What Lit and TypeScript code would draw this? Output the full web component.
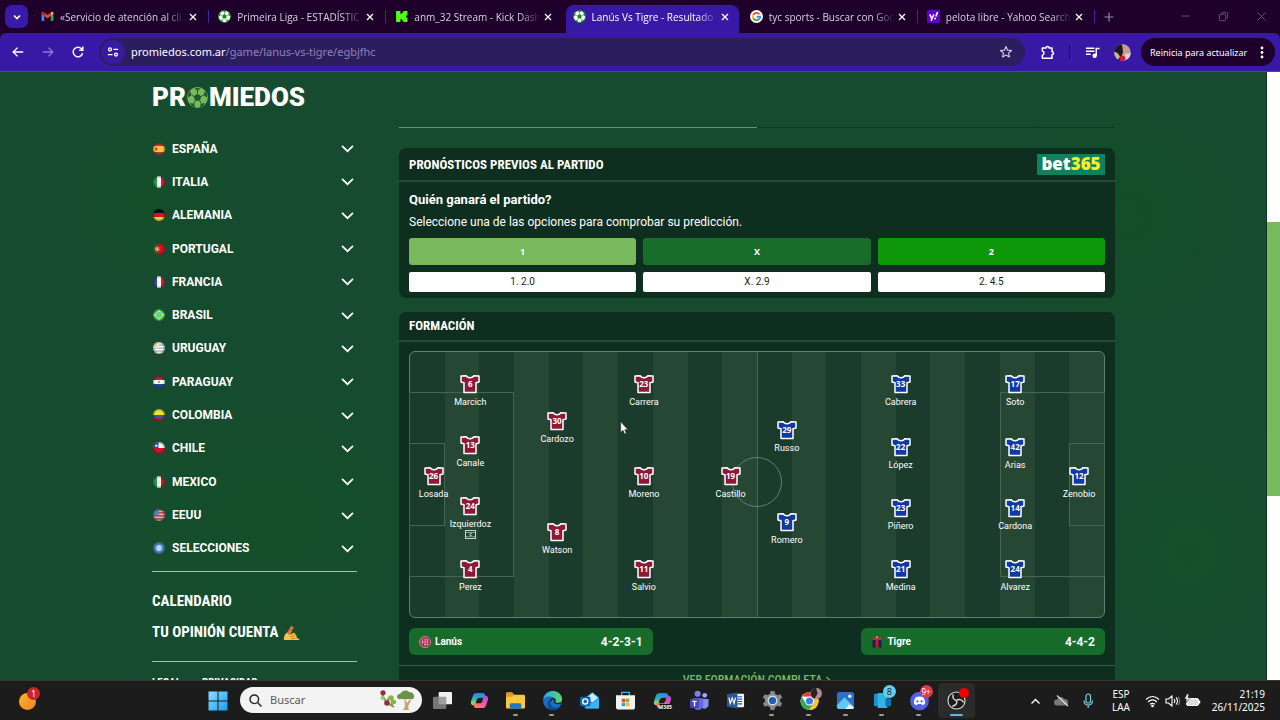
import { LitElement, html, svg, css } from "lit";
import { customElement } from "lit/decorators.js";
import { classMap } from "lit/directives/class-map.js";
import { styleMap } from "lit/directives/style-map.js";

/* ---------- shared icons ---------- */

const ball = (dark: string, light: string, rim = dark) => html`<svg viewBox="0 0 24 24">
  <circle cx="12" cy="12" r="11.2" fill=${light} stroke=${rim} stroke-width="1.4" />
  <path fill=${dark} d="M12 7.6l4.300 3.100-1.600 5.100H9.300L7.700 10.700zM8.300 1.500h7.400L12 4.600zM1 8.600l2.600-4 1.500 4.600-4 3.200zM23 8.600l-2.600-4-1.500 4.600 4 3.200zM3.200 18.600l4.800.2 1.500 4.300-3.600-1.500zM20.800 18.600l-4.800.2-1.500 4.300 3.600-1.500z" />
  <path d="M12 4.600v3M5.100 9.200l2.600 1.500M18.900 9.200l-2.600 1.500M8 18.800l1.300-3M16 18.800l-1.300-3" stroke=${dark} stroke-width="1.100" />
</svg>`;

const closeIcon = html`<svg viewBox="0 0 10 10"><path d="M2 2l6 6M8 2L2 8" stroke="currentColor" stroke-width="1.300" fill="none" /></svg>`;

const tabIcons: Record<string, unknown> = {
  gmail: html`<svg viewBox="0 0 24 24">
    <path d="M1 6v13a1.500 1.500 0 0 0 1.500 1.500H6V10z" fill="#4285f4" />
    <path d="M23 6v13a1.500 1.500 0 0 1-1.500 1.500H18V10z" fill="#34a853" />
    <path d="M18 5v6l5-4V5.500c0-2-2.200-3-3.800-1.900z" fill="#fbbc04" />
    <path d="M6 11V4.800l6 4.500 6-4.500V11l-6 4.500z" fill="#ea4335" />
    <path d="M1 5.500V7l5 4V4.800L4.800 3.600C3.200 2.500 1 3.500 1 5.500z" fill="#c5221f" />
  </svg>`,
  ball: ball("#128a1e", "#ffffff"),
  kick: html`<svg viewBox="0 0 24 24"><path fill="#53fc18" d="M2 2h8v5h3V4.500h2.500V2H23v8h-2.500v4H23v8h-7.500v-2.500H13V17h-3v5H2z" /></svg>`,
  google: html`<svg viewBox="0 0 24 24">
    <circle cx="12" cy="12" r="12" fill="#fff" />
    <g fill="none" stroke-width="3.400">
      <path d="M17.300 7.800A6.800 6.800 0 0 0 6 9" stroke="#ea4335" />
      <path d="M6 9a6.800 6.800 0 0 0 0 6" stroke="#fbbc05" />
      <path d="M6 15a6.800 6.800 0 0 0 10.600 2.200" stroke="#34a853" />
      <path d="M16.600 17.200A6.800 6.800 0 0 0 18.800 12.500H12.300" stroke="#4285f4" />
    </g>
  </svg>`,
  yahoo: html`<svg viewBox="0 0 24 24">
    <rect width="24" height="24" rx="2" fill="#6001d2" />
    <path d="M5 8l3.700 7.500M12.600 8L7.500 20" stroke="#fff" stroke-width="2.800" fill="none" />
    <path d="M19.500 4l-3.200 8" stroke="#fff" stroke-width="3" />
    <circle cx="15" cy="15.800" r="1.800" fill="#fff" />
  </svg>`,
};

/* ---------- flags ---------- */

const bars = (vertical: boolean, colors: [string, number][]) => {
  let at = 0;
  return colors.map(([c, size]) => {
    const start = at;
    at += size;
    return vertical
      ? svg`<rect x=${start} y="0" width=${size} height="24" fill=${c} />`
      : svg`<rect x="0" y=${start} width="24" height=${size} fill=${c} />`;
  });
};

const flagArt: Record<string, unknown> = {
  es: svg`${bars(false, [["#c8323c", 6], ["#ffc83a", 12], ["#c8323c", 6]])}<rect x="4" y="9" width="5" height="6" rx="1" fill="#b5562a" />`,
  it: svg`${bars(true, [["#2a9a4b", 8], ["#f4f4f4", 8], ["#c2243a", 8]])}`,
  de: svg`${bars(false, [["#0c0c0c", 8], ["#d3122a", 8], ["#ffcf3a", 8]])}`,
  pt: svg`${bars(true, [["#2c7a2c", 8], ["#d01224", 16]])}<circle cx="8.500" cy="12" r="4.500" fill="#e8a060" /><circle cx="8.500" cy="12" r="2.800" fill="#d8424c" /><circle cx="8.500" cy="12" r="1.600" fill="#fff" />`,
  fr: svg`${bars(true, [["#33489a", 8], ["#f8f8f8", 8], ["#c2243a", 8]])}`,
  br: svg`<rect width="24" height="24" fill="#43b84b" /><path d="M12 1l12 11-12 11L0 12z" fill="#d8ec4a" /><circle cx="12" cy="12" r="6.500" fill="#4fd8b4" />`,
  uy: svg`${bars(false, [["#fff", 4], ["#c3d3e6", 3], ["#fff", 3], ["#c3d3e6", 3], ["#fff", 3], ["#c3d3e6", 3], ["#fff", 5]])}<rect width="11" height="12" fill="#f3f3dc" /><circle cx="7" cy="8" r="2.600" fill="#f0dc86" />`,
  py: svg`${bars(false, [["#c8202c", 8], ["#fff", 8], ["#26469c", 8]])}<circle cx="12" cy="12" r="2.500" fill="#8fa8b8" />`,
  co: svg`${bars(false, [["#f0e52a", 12], ["#3d55a0", 6], ["#b8202c", 6]])}`,
  cl: svg`${bars(false, [["#f6f6f6", 12], ["#d0142a", 12]])}<rect width="11" height="12" fill="#2d4fa4" /><path d="M6.500 3.800l1 2.300 2.500.1-2 1.500.8 2.400-2.300-1.300-2.200 1.300.7-2.400-2-1.500 2.500-.1z" fill="#fff" />`,
  mx: svg`${bars(true, [["#2a9a5b", 8], ["#f4f4ee", 8], ["#b8202c", 8]])}<circle cx="12" cy="12" r="2" fill="#dcd8c0" />`,
  us: svg`${bars(false, [["#c9404e", 3], ["#e4b4b8", 3], ["#c9404e", 3], ["#e4b4b8", 3], ["#c9404e", 3], ["#e4b4b8", 3], ["#c9404e", 3], ["#e4b4b8", 3]])}<rect width="12" height="12" fill="#6a7cb8" />`,
  un: svg`<rect width="24" height="24" fill="#4a86c4" /><circle cx="12" cy="12" r="6" fill="#a4c8e4" /><path d="M8 11l3 3 5-5M12 7v3M9 16h6" fill="none" stroke="#f0f8fc" stroke-width="1.500" />`,
};

const flag = (code: string) => html`<svg viewBox="0 0 24 24">
  <defs>
    <clipPath id="round"><circle cx="12" cy="12" r="12" /></clipPath>
    <radialGradient id="shade"><stop offset=".6" stop-color="#000" stop-opacity="0" /><stop offset="1" stop-color="#000" stop-opacity=".35" /></radialGradient>
  </defs>
  <g clip-path="url(#round)">${flagArt[code]}</g>
  <circle cx="12" cy="12" r="12" fill="url(#shade)" />
</svg>`;

/* ---------- browser window ---------- */

@customElement("browser-chrome")
class BrowserChrome extends LitElement {
  tabs = [
    { icon: "gmail", title: "«Servicio de atención al cli" },
    { icon: "ball", title: "Primeira Liga - ESTADÍSTIC" },
    { icon: "kick", title: "anm_32 Stream - Kick Dash" },
    { icon: "ball", title: "Lanús Vs Tigre - Resultado", active: true },
    { icon: "google", title: "tyc sports - Buscar con Goo" },
    { icon: "yahoo", title: "pelota libre - Yahoo Search" },
  ];

  static styles = css`
    :host { display: block; background: #1e002b; color: #d9cfe6; font-family: "Open Sans", "Noto Sans", sans-serif; font-size: 10px; }
    button { border: 0; background: none; padding: 0; color: inherit; font: inherit; display: grid; place-items: center; }
    svg { display: block; width: 100%; height: 100%; }
    .strip { display: flex; height: 33px; align-items: stretch; }
    .search-tabs { width: 23px; height: 23px; margin: 5px 4px 5px 5px; border-radius: 7px; background: #381ba6; color: #fff; }
    .search-tabs svg { width: 10px; height: 10px; }
    .tabs { flex: 1; display: flex; min-width: 0; }
    .tab { flex: 1; min-width: 0; display: flex; align-items: center; padding: 0 11px 0 9px; position: relative; }
    .tab:not(.active):not(.before)::after { content: ""; position: absolute; right: 0; top: 10px; height: 13px; width: 1px; background: #3f22b0; }
    .tab.active { color: #fff; }
    .tab.active::before { content: ""; position: absolute; inset: 5px 2px 0 2px; border-radius: 8px 8px 0 0; background: #3719a6; }
    .fav { flex: none; width: 13px; height: 13px; position: relative; margin-right: 6px; }
    .title { flex: 1; min-width: 0; overflow: hidden; white-space: nowrap; position: relative; line-height: 16px; mask-image: linear-gradient(90deg, #000 82%, transparent 98%); }
    .close { flex: none; width: 10px; height: 10px; color: #fff; position: relative; }
    .right { flex: none; width: 185px; display: flex; align-items: center; color: #9a84ae; }
    .new { width: 28px; height: 28px; }
    .new svg { width: 10px; height: 10px; }
    .window { margin-left: auto; display: flex; color: #6b5778; }
    .window button { width: 38px; height: 30px; }
    .window svg { width: 11px; height: 11px; }
    .bar { height: 39px; box-sizing: border-box; border-bottom: 1px solid #49479a; border-radius: 6px 6px 0 0; background: #3719a6; display: flex; align-items: center; color: #fff; }
    .nav { width: 30px; height: 28px; }
    .navs { display: flex; padding-left: 3px; width: 99px; box-sizing: border-box; }
    .nav svg { width: 14px; height: 14px; }
    .nav.off { color: #8d79cc; }
    .address { flex: 1; display: flex; align-items: center; height: 28px; border-radius: 14px; background: #2c1d5f; min-width: 0; }
    .site { width: 24px; height: 24px; border-radius: 12px; background: #371aa0; margin-left: 2px; }
    .site svg { width: 12px; height: 12px; }
    .url { flex: 1; margin-left: 6px; font: 11px/20px "Noto Sans", "Open Sans", sans-serif; color: #8e84b0; white-space: nowrap; }
    .url b { font-weight: 400; color: #fff; }
    .star { width: 38px; height: 28px; color: #d6cdea; }
    .star svg { width: 14px; height: 14px; }
    .ext { width: 44px; height: 28px; }
    .ext svg { width: 15px; height: 15px; }
    .sep { width: 1px; height: 14px; background: #23105f; }
    .media { width: 44px; height: 28px; }
    .media svg { width: 15px; height: 15px; }
    .avatar { width: 17px; height: 17px; border-radius: 50%; margin-right: 10px; }
    .update { height: 28px; border-radius: 14px; background: #1e002b; padding: 0 11px 0 9px; margin-right: 5px; display: flex; align-items: center; font-family: "Noto Sans", "Open Sans", sans-serif; font-size: 9px; width: 134px; box-sizing: border-box; justify-content: space-between; white-space: nowrap; }
    .update svg { width: 4px; height: 13px; }
  `;

  render() {
    const activeAt = this.tabs.findIndex((t) => t.active);
    return html`
      <div class="strip">
        <button class="search-tabs" aria-label="Buscar pestañas">
          <svg viewBox="0 0 10 10"><path d="M2 3.500l3 3 3-3" fill="none" stroke="currentColor" stroke-width="1.700" /></svg>
        </button>
        <div class="tabs">
          ${this.tabs.map(
            (t, i) => html`<div class=${classMap({ tab: true, active: i === activeAt, before: i === activeAt - 1 || i === activeAt })}>
              <span class="fav">${tabIcons[t.icon]}</span>
              <span class="title">${t.title}</span>
              <button class="close" aria-label="Cerrar">${closeIcon}</button>
            </div>`
          )}
        </div>
        <div class="right">
          <button class="new" aria-label="Nueva pestaña"><svg viewBox="0 0 10 10"><path d="M5 .5v9M.5 5h9" stroke="currentColor" stroke-width="1.200" /></svg></button>
          <div class="window">
            <button aria-label="Minimizar"><svg viewBox="0 0 12 12"><path d="M1.500 5.500h9" stroke="currentColor" /></svg></button>
            <button aria-label="Restaurar"><svg viewBox="0 0 12 12" fill="none" stroke="currentColor"><rect x="1.500" y="3.500" width="7" height="7" rx="1" /><path d="M4 3V2.500a1 1 0 0 1 1-1h4.500a1 1 0 0 1 1 1V7a1 1 0 0 1-1 1H9" /></svg></button>
            <button aria-label="Cerrar ventana"><svg viewBox="0 0 12 12"><path d="M1.500 1.500l9 9M10.500 1.500l-9 9" stroke="currentColor" /></svg></button>
          </div>
        </div>
      </div>
      <div class="bar">
        <div class="navs">
          <button class="nav" aria-label="Atrás"><svg viewBox="0 0 16 16"><path d="M14 8H3M7.500 3L2.500 8l5 5" fill="none" stroke="currentColor" stroke-width="1.600" /></svg></button>
          <button class="nav off" aria-label="Adelante"><svg viewBox="0 0 16 16"><path d="M2 8h11M8.500 3l5 5-5 5" fill="none" stroke="currentColor" stroke-width="1.600" /></svg></button>
          <button class="nav" aria-label="Recargar"><svg viewBox="0 0 16 16"><path d="M13.300 9.500A5.500 5.500 0 1 1 12 4.200l1.300 1.400M13.500 1.800v4.100H9.400" fill="none" stroke="currentColor" stroke-width="1.700" /></svg></button>
        </div>
        <div class="address">
          <button class="site" aria-label="Información del sitio"><svg viewBox="0 0 14 14" fill="none" stroke="#fff" stroke-width="1.500"><circle cx="3.500" cy="4" r="1.700" /><path d="M7.500 4H13M1 10h5.500" /><circle cx="10.500" cy="10" r="1.700" /></svg></button>
          <span class="url"><b>promiedos.com.ar</b>/game/lanus-vs-tigre/egbjfhc</span>
          <button class="star" aria-label="Favorito"><svg viewBox="0 0 16 16"><path d="M8 1.800l1.800 4.100 4.500.4-3.400 3 1 4.400L8 11.400l-3.900 2.300 1-4.400-3.400-3 4.500-.4z" fill="none" stroke="currentColor" stroke-width="1.300" stroke-linejoin="round" /></svg></button>
        </div>
        <button class="ext" aria-label="Extensiones"><svg viewBox="0 0 16 16"><path d="M2.500 3.200h4a1.600 1.600 0 0 1 3.200 0h3.100v4a1.600 1.600 0 0 1 0 3.200v3.600H2.500v-3.200c2.300-.3 2.300-4 0-4.300z" fill="none" stroke="currentColor" stroke-width="1.600" stroke-linejoin="round" /></svg></button>
        <span class="sep"></span>
        <button class="media" aria-label="Multimedia"><svg viewBox="0 0 16 16" fill="none" stroke="currentColor" stroke-width="1.500"><path d="M1 3.500h9M1 6.700h9M1 9.900h5" /><circle cx="10.300" cy="11.500" r="1.600" fill="currentColor" /><path d="M12 11.500V3.800h3.500" /></svg></button>
        <svg class="avatar" viewBox="0 0 17 17"><clipPath id="a"><circle cx="8.500" cy="8.500" r="8.500" /></clipPath><g clip-path="url(#a)"><rect width="17" height="17" fill="#c79a94" /><path d="M0 0h8l1 8-3 9H0z" fill="#1c1a20" /><path d="M0 8c3 0 5 2 6 5l-3 4H0z" fill="#c9b6a0" /><path d="M11 10l6-1v8h-7z" fill="#ddd3d6" /><circle cx="8.500" cy="14.500" r="2.800" fill="#e0152c" /></g></svg>
        <button class="update"><span>Reinicia para actualizar</span><svg viewBox="0 0 4 13" fill="#fff"><circle cx="2" cy="2" r="1.400" /><circle cx="2" cy="6.500" r="1.400" /><circle cx="2" cy="11" r="1.400" /></svg></button>
      </div>
    `;
  }
}

/* ---------- sidebar ---------- */

@customElement("side-nav")
class SideNav extends LitElement {
  countries = [
    ["es", "ESPAÑA"], ["it", "ITALIA"], ["de", "ALEMANIA"], ["pt", "PORTUGAL"], ["fr", "FRANCIA"], ["br", "BRASIL"], ["uy", "URUGUAY"],
    ["py", "PARAGUAY"], ["co", "COLOMBIA"], ["cl", "CHILE"], ["mx", "MEXICO"], ["us", "EEUU"], ["un", "SELECCIONES"],
  ];

  static styles = css`
    :host { display: block; color: #fff; font-family: Roboto, sans-serif; }
    .logo { display: flex; align-items: center; height: 28px; margin-top: 11px; font-weight: 900; font-size: 26px; line-height: 28px; color: #fff; text-decoration: none; }
    .logo svg { width: 21px; height: 21px; margin: 0 1px; display: block; }
    .list { list-style: none; margin: 21px 0 0; padding: 0; display: grid; grid-auto-rows: 1fr; min-height: 433px; }
    li { display: grid; }
    .item { display: flex; align-items: center; gap: 7px; border: 0; background: none; padding: 0 3px 0 1px; color: #fff; font: 700 12px/20px Roboto, sans-serif; }
    .item .flag { width: 12px; height: 12px; }
    .item svg { display: block; width: 100%; height: 100%; }
    .item .down { margin-left: auto; width: 13px; height: 13px; }
    .links { margin-top: 6px; border: solid #9fc8a8; border-width: 1px 0; padding: 14px 0 13px; display: grid; font-family: "Roboto Condensed", "Liberation Sans Narrow", Roboto, sans-serif; font-weight: 700; font-size: 15px; line-height: 31px; }
    a { color: #fff; text-decoration: none; white-space: nowrap; }
    .legal { display: flex; gap: 21px; margin-top: 11px; font: 700 11px/20px "Roboto Condensed", "Liberation Sans Narrow", Roboto, sans-serif; }
    .links a { display: flex; align-items: center; gap: 5px; }
    .hand { width: 17px; height: 16px; }
  `;

  render() {
    return html`
      <a class="logo" href="#" aria-label="Promiedos">PR${ball("#1b5a2c", "#77b95c", "#77b95c")}MIEDOS</a>
      <ul class="list">
        ${this.countries.map(
          ([code, name]) => html`<li><button class="item">
            <span class="flag">${flag(code)}</span>${name}
            <span class="down"><svg viewBox="0 0 13 13"><path d="M1 3.800l5.500 5.400L12 3.800" fill="none" stroke="#fff" stroke-width="1.700" /></svg></span>
          </button></li>`
        )}
      </ul>
      <nav class="links">
        <a href="#">CALENDARIO</a>
        <a href="#">TU OPINIÓN CUENTA
          <svg class="hand" viewBox="0 0 17 16"><path d="M1 15c-.6-3 .6-5.500 3-7.500L7 5l1.800 1.200-2 3 4-1.400c1.200-.3 1.800 1 .8 1.700 1.600-.4 2.400 1 1.300 1.800 1.300 0 1.700 1.300.6 1.900l2.700.6v1.300H1z" fill="#fac04c" /><path d="M3.500 8.500L8.300.8 11 2.500 5.800 10z" fill="#e8702e" /><path d="M3.500 8.500L5.800 10l-2.600 1.500z" fill="#f4d8a0" /><path d="M6.500 10.200l4-1.500M7.500 12l4.500-1.200M8 13.500h4.500" stroke="#b8741c" stroke-width=".7" fill="none" /></svg>
        </a>
      </nav>
      <div class="legal"><a href="#">LEGAL</a><a href="#">PRIVACIDAD</a></div>
    `;
  }
}

/* ---------- formation ---------- */

type Player = { n: number; name: string; x: number; y: number; armband?: boolean };

@customElement("team-pitch")
class TeamPitch extends LitElement {
  /* x and y are percentages of the pitch, measured to the middle of the shirt */
  home: Player[] = [
    { n: 26, name: "Losada", x: 3.4, y: 46.8 },
    { n: 6, name: "Marcich", x: 8.7, y: 12.2 },
    { n: 13, name: "Canale", x: 8.7, y: 35.2 },
    { n: 24, name: "Izquierdoz", x: 8.7, y: 58.2, armband: true },
    { n: 4, name: "Perez", x: 8.7, y: 81.8 },
    { n: 30, name: "Cardozo", x: 21.2, y: 26.2 },
    { n: 8, name: "Watson", x: 21.2, y: 67.8 },
    { n: 23, name: "Carrera", x: 33.7, y: 12.2 },
    { n: 10, name: "Moreno", x: 33.7, y: 46.8 },
    { n: 11, name: "Salvio", x: 33.7, y: 81.8 },
    { n: 19, name: "Castillo", x: 46.2, y: 46.8 },
  ];
  away: Player[] = [
    { n: 29, name: "Russo", x: 54.3, y: 29.6 },
    { n: 9, name: "Romero", x: 54.3, y: 64.3 },
    { n: 33, name: "Cabrera", x: 70.7, y: 12.2 },
    { n: 22, name: "López", x: 70.7, y: 35.9 },
    { n: 23, name: "Piñero", x: 70.7, y: 58.8 },
    { n: 21, name: "Medina", x: 70.7, y: 81.8 },
    { n: 17, name: "Soto", x: 87.2, y: 12.2 },
    { n: 42, name: "Arias", x: 87.2, y: 35.9 },
    { n: 14, name: "Cardona", x: 87.2, y: 58.8 },
    { n: 24, name: "Alvarez", x: 87.2, y: 81.8 },
    { n: 12, name: "Zenobio", x: 96.4, y: 46.8 },
  ];

  static styles = css`
    :host { display: block; font-family: Roboto, sans-serif; }
    .pitch { position: relative; box-sizing: border-box; height: 267px; border: 1px solid #64806c; border-radius: 6px; background: repeating-linear-gradient(90deg, #1b3b2c 0 5%, #274735 5% 10%); }
    .line { position: absolute; box-sizing: border-box; border: 1px solid #466552; }
    .box-l { left: -1px; top: 15.2%; width: 15.2%; height: 69.6%; }
    .goal-l { left: -1px; top: 34.200%; width: 5.200%; height: 31.600%; }
    .box-r { right: -1px; top: 15.2%; width: 15.2%; height: 69.6%; }
    .goal-r { right: -1px; top: 34.200%; width: 5.200%; height: 31.600%; }
    .half { left: 50%; top: 0; height: 100%; width: 1px; border-width: 0 0 0 1px; }
    .circle { left: 50%; top: 49%; width: 50px; height: 50px; margin: -25px; border-radius: 50%; border-color: #64806c; }
    .player { position: absolute; width: 60px; margin: -10px 0 0 -30px; display: grid; justify-items: center; color: #fff; text-decoration: none; font-size: 9px; line-height: 12px; }
    .shirt { position: relative; width: 20px; height: 20px; margin-bottom: 2px; display: grid; place-items: center; }
    .shirt svg { position: absolute; inset: 0; }
    .num { position: relative; font: 700 8px/10px "Open Sans", "Noto Sans", sans-serif; }
    .home { fill: #8f1838; }
    .away { fill: #1039a3; }
    .armband { width: 11px; height: 9px; }
    .cursor { position: absolute; left: 30.200%; top: 26%; width: 9px; height: 14px; }
  `;

  player(p: Player, side: string) {
    return html`<a href="#" class="player" style=${styleMap({ left: p.x + "%", top: p.y + "%" })}>
      <span class="shirt">
        <svg viewBox="0 0 20 20"><path class=${side} d="M6.300 1.700L1 2v6l3 .8V18.500h12V8.800L19 8V2l-5.300-.3C12.800 4.300 7.200 4.300 6.300 1.700z" stroke="#fff" stroke-width="1.500" stroke-linejoin="round" /></svg>
        <span class="num">${p.n}</span>
      </span>
      <span>${p.name}</span>
      ${p.armband
        ? html`<svg class="armband" viewBox="0 0 11 9" fill="none" stroke="#c9d4cc"><rect x=".5" y=".5" width="10" height="8" /><path d="M.5 2.500h10M.5 6.700h10" stroke-width=".6" /><path d="M6.800 3.400a1.300 1.300 0 1 0 0 2.200" /></svg>`
        : ""}
    </a>`;
  }

  render() {
    return html`<div class="pitch">
      <span class="line box-l"></span><span class="line goal-l"></span>
      <span class="line box-r"></span><span class="line goal-r"></span>
      <span class="line half"></span><span class="line circle"></span>
      ${this.home.map((p) => this.player(p, "home"))} ${this.away.map((p) => this.player(p, "away"))}
      <svg class="cursor" viewBox="0 0 9 14"><path d="M.7.7v10.600l2.300-2 1.600 3.700 1.700-.8-1.600-3.500h3.200z" fill="#fff" stroke="#222" stroke-width=".5" /></svg>
    </div>`;
  }
}

/* ---------- match page ---------- */

@customElement("match-page")
class MatchPage extends LitElement {
  odds = [
    { key: "1", value: "2.0", tone: "light" },
    { key: "X", value: "2.9", tone: "mid" },
    { key: "2", value: "4.5", tone: "vivid" },
  ];

  static styles = css`
    :host { display: flex; overflow: hidden; min-height: 0; font-family: Roboto, sans-serif; color: #fff; }
    .page { flex: 1; min-width: 0; overflow: hidden; padding-left: 1px; border-right: 1px solid #10331f; background:
      radial-gradient(closest-side, #134f29 0, transparent) 60px 280px / 420px 340px no-repeat,
      radial-gradient(closest-side, #124e28 0, transparent) 930px -20px / 380px 330px no-repeat,
      radial-gradient(closest-side, #134e2a 0, transparent) 0 0 / 300px 260px no-repeat,
      radial-gradient(closest-side, #144f2a 0, transparent) 1060px 330px / 260px 300px no-repeat,
      #164b30; }
    .wrap { max-width: 963px; margin: 0 auto; display: grid; grid-template-columns: 205px minmax(0, 1fr); gap: 42px; }
    .scroll { width: 13px; background: #fff; display: flex; flex-direction: column; }
    .thumb { background: #77b95c; flex: 274; }
    .before { flex: 150; }
    .after { flex: 184; }
    .steps { height: 1px; margin-top: 55px; background: linear-gradient(90deg, #5c9c56 50%, #0f3a22 50%); }
    .card { background: #0e2e1f; border-radius: 7px; margin-top: 20px; }
    .card + .card { margin-top: 14px; }
    .head { display: flex; align-items: center; justify-content: space-between; padding: 0 10px; border-bottom: 2px solid #2a4b38; height: 28px; }
    .head.tall { height: 32px; }
    h2 { margin: 0; font: 700 13px/20px "Roboto Condensed", "Liberation Sans Narrow", Roboto, sans-serif; white-space: nowrap; }
    .tall h2 { padding-top: 2px; }
    .brand { background: #12805a; width: 68px; height: 21px; display: grid; place-items: center; font: 900 17px/20px "Noto Sans", "Open Sans", sans-serif; text-decoration: none; color: #fff; }
    .brand b { font-weight: inherit; color: #f6ee2c; }
    .body { padding: 8px 10px 6px; }
    h3 { margin: 0; font-size: 13px; line-height: 20px; font-weight: 700; }
    p { margin: 2px 0 6px; font-size: 12px; line-height: 20px; }
    .odds { display: grid; grid-template-columns: repeat(3, 1fr); gap: 7px; }
    button { border: 0; padding: 0; color: #fff; border-radius: 3px; font: 700 9px/27px "Open Sans", sans-serif; }
    .light { background: #77b95c; }
    .mid { background: #196d2b; }
    .vivid { background: #0e9708; }
    .odd { background: #fff; color: #222; text-align: center; font-size: 10px; line-height: 20px; border-radius: 2px; text-decoration: none; }
    .field { padding: 9px 10px 10px; }
    .teams { display: flex; justify-content: space-between; margin-top: 10px; }
    .team { width: 35%; box-sizing: border-box; height: 27px; border-radius: 6px; background: #186c2b; display: flex; align-items: center; gap: 4px; padding: 0 10px; font-weight: 700; font-size: 10px; line-height: 20px; }
    .team svg { width: 12px; height: 12px; }
    .system { margin-left: auto; font-size: 12px; }
    .more { display: flex; justify-content: center; align-items: center; gap: 3px; border-top: 1px solid #3c5c48; padding: 4px 0 10px; color: #77b95c; font: 500 12px/20px "Roboto Condensed", "Liberation Sans Narrow", Roboto, sans-serif; text-decoration: none; }
    .more svg { width: 6px; height: 8px; }
  `;

  render() {
    return html`
      <div class="page">
        <div class="wrap">
          <side-nav></side-nav>
          <main>
            <div class="steps"></div>
            <section class="card">
              <div class="head tall"><h2>PRONÓSTICOS PREVIOS AL PARTIDO</h2><a class="brand" href="#"><span>bet<b>365</b></span></a></div>
              <div class="body">
                <h3>Quién ganará el partido?</h3>
                <p>Seleccione una de las opciones para comprobar su predicción.</p>
                <div class="odds">
                  ${this.odds.map((o) => html`<button class=${o.tone}>${o.key}</button>`)}
                  ${this.odds.map((o) => html`<a class="odd" href="#">${o.key}. ${o.value}</a>`)}
                </div>
              </div>
            </section>
            <section class="card">
              <div class="head"><h2>FORMACIÓN</h2></div>
              <div class="field">
                <team-pitch></team-pitch>
                <div class="teams">
                  <div class="team">
                    <svg viewBox="0 0 12 12"><circle cx="6" cy="6" r="5.500" fill="#a8244e" stroke="#d9a0b4" stroke-width=".8" /><path d="M3.500 2.500v6M2 6h7.500M6 2v8M8.500 3v6M6 3.800h3M5 8.500h4" stroke="#e6b8c6" stroke-width=".7" fill="none" /></svg>
                    <span>Lanús</span><span class="system">4-2-3-1</span>
                  </div>
                  <div class="team">
                    <svg viewBox="0 0 12 12"><path d="M1.500 2.500h9v9h-9z" fill="#1c1c54" /><path d="M4.500 2.500h3v9h-3z" fill="#c8182c" /><path d="M1.500 1.500h9V4h-9z" fill="#b8303a" /><circle cx="6" cy="1.300" r="1" fill="#e0b08a" /></svg>
                    <span>Tigre</span><span class="system">4-4-2</span>
                  </div>
                </div>
              </div>
              <a class="more" href="#">VER FORMACIÓN COMPLETA<svg viewBox="0 0 6 8"><path d="M1.500 1l3 3-3 3" fill="none" stroke="currentColor" stroke-width="1.200" /></svg></a>
            </section>
          </main>
        </div>
      </div>
      <div class="scroll"><span class="before"></span><span class="thumb"></span><span class="after"></span></div>
    `;
  }
}

/* ---------- taskbar ---------- */

const copilot = svg`<path d="M7 2h6.500c1.500 0 2 1 2.500 2.500l.7 2.500H10c-2 0-2.800 1.500-3.300 3.300L5.500 15H4c-2.500 0-3.500-1.800-3-4L3 5C3.600 3 5 2 7 2z" fill="url(#c1)" /><path d="M13 18H6.500c-1.500 0-2-1-2.500-2.500L3.300 13H10c2 0 2.800-1.500 3.300-3.300L14.500 5H16c2.500 0 3.500 1.800 3 4l-2 6c-.6 2-2 3-4 3z" fill="url(#c2)" />
  <defs><linearGradient id="c1" x1="0" y1="0" x2="0" y2="1"><stop stop-color="#2a7de8" /><stop offset=".5" stop-color="#2fb8b0" /><stop offset="1" stop-color="#e8d23a" /></linearGradient><linearGradient id="c2" x1="1" y1="0" x2="0" y2="1"><stop stop-color="#a24be8" /><stop offset=".5" stop-color="#f05aa0" /><stop offset="1" stop-color="#f8904a" /></linearGradient></defs>`;

@customElement("task-bar")
class TaskBar extends LitElement {
  apps: { name: string; open?: boolean; active?: boolean; badge?: string; tone?: string; art: unknown }[] = [
    { name: "Vista de tareas", art: svg`<rect x="6" y="1" width="14" height="13" rx="1" fill="#f0f0f0" /><rect x="0" y="6" width="14" height="13" rx="1" fill="#8c8c8c" fill-opacity=".8" />` },
    { name: "Copilot", art: copilot },
    { name: "Explorador", open: true, art: svg`<path d="M0 3c0-1 .5-1.500 1.500-1.500h5L8.500 4H18c1.500 0 2 .5 2 1.500V17c0 1-.5 1.500-1.500 1.500h-17C.5 18.500 0 18 0 17z" fill="#f8c93c" /><path d="M0 3c0-1 .5-1.500 1.500-1.500h5L8.500 4 7 6H0z" fill="#e0982a" /><path d="M4 14.500c0-1 .5-1.500 1.500-1.500h9c1 0 1.500.5 1.500 1.500v4H4z" fill="#1c7ac4" />` },
    { name: "Edge", open: true, art: svg`<defs><linearGradient id="e1" x1="0" y1="0" x2="1" y2="0"><stop stop-color="#2aa8e8" /><stop offset="1" stop-color="#5fd46a" /></linearGradient></defs><circle cx="10" cy="10" r="10" fill="#1a6ec8" /><path d="M.3 8.500C1.500 3 6 0 10.500 0 16 0 20 4 20 8.500c0 3-2.200 4.800-5 4.800-1.800 0-3-.8-2.500-1.800.5-.8.500-1.500.2-2.500C12 6.500 9 5.500 6.500 5.800 3.500 6 1.300 7.200.3 8.500z" fill="url(#e1)" /><path d="M7.500 11c0 4 3 6.500 6.500 6.500 2 0 3.500-.6 4.500-1.300-1.800 2.500-5 3.800-8.500 3.800-4-1-6-4-5.300-7.500.3-1.500 1.500-3 3.300-3.700-.3.500-.5 1.200-.5 2.200z" fill="#0f4c94" /><path d="M8 11c0-2 1.800-3.500 3.500-2.700 1.500.7 1.500 2 1 3s.5 2 3 2l3.500-.8" fill="none" stroke="#1e1e1e" stroke-width="1.400" />` },
    { name: "Outlook", art: svg`<path d="M5 7l8-6 7 5.500V17c0 1-.7 1.500-1.500 1.500H5z" fill="#1c86d8" /><path d="M7 7l6-5 6 5-6 5z" fill="#c8ecfc" /><path d="M5 9l8 4 7-5.500V17c0 1-.7 1.500-1.500 1.500H6z" fill="#38b4f0" /><rect y="6" width="11" height="10" rx="1.500" fill="#0f64b8" /><circle cx="5.500" cy="11" r="2.700" fill="none" stroke="#fff" stroke-width="1.500" />` },
    { name: "Microsoft Store", art: svg`<path d="M6 5V1.500h8V5" fill="none" stroke="#46b4e8" stroke-width="1.400" /><path d="M0 4.500h20V17c0 1.500-1 2.500-2.500 2.500h-15C1 19.500 0 18.500 0 17z" fill="#f3f3f3" /><path d="M6 8h3.700v3.700H6z" fill="#e8502c" /><path d="M10.300 8H14v3.700h-3.700z" fill="#7cb82a" /><path d="M6 12.300h3.700V16H6z" fill="#2a9ce0" /><path d="M10.300 12.300H14V16h-3.700z" fill="#f8b82a" />` },
    { name: "Microsoft 365 Copilot", tone: "m365", badge: "M365", art: copilot },
    { name: "Teams", art: svg`<circle cx="8" cy="3" r="3.200" fill="#7b7ff0" /><circle cx="15.500" cy="4.500" r="2.500" fill="#a0a4f8" /><path d="M12 8.500h7.500V15a4 4 0 0 1-7.500 1.500z" fill="#8a8cf4" /><path d="M3 7.500h11V14a5.500 5.500 0 0 1-11 1z" fill="#6468e0" /><rect y="8.500" width="9.500" height="9.500" rx="1.500" fill="#4a48b8" /><path d="M2.500 11h4.500M4.750 11v5" stroke="#fff" stroke-width="1.400" />` },
    { name: "Word", art: svg`<rect x="7" y="3" width="12" height="14" rx="1" fill="#f4f6fa" /><path d="M12 6h5M12 8.500h5M12 11h5M12 13.500h5" stroke="#2a569c" stroke-width="1.200" /><path d="M1 3.500L12 1.500v17L1 16.500z" fill="#2a569c" /><path d="M3 7l1.500 6L6.500 7.500l2 5.500L10 7" fill="none" stroke="#fff" stroke-width="1.300" />` },
    { name: "Configuración", open: true, art: svg`<path d="M8 0h4l.7 3 2.500 1.400 3-1 2 3.400-2.300 2.200v2l2.300 2.200-2 3.400-3-1-2.500 1.400-.7 3H8l-.7-3-2.500-1.400-3 1-2-3.400L2.100 11V9L-.2 6.800l2-3.400 3 1L7.300 3z" fill="#82898f" /><circle cx="10" cy="10" r="5.300" fill="#d8dce0" /><circle cx="10" cy="10" r="3.800" fill="#1c5fb0" />` },
    { name: "Chrome", open: true, art: svg`<circle cx="10" cy="10.500" r="9.500" fill="#fff" /><path d="M1.800 5.700A9.500 9.500 0 0 1 18.200 5.700L10 6z" fill="#e8402f" /><path d="M18.200 5.700A9.500 9.500 0 0 1 9.500 20l4.600-7.500L13.500 6z" fill="#fcc428" /><path d="M1.800 5.700A9.500 9.500 0 0 0 9.500 20l4-6-7.500-1z" fill="#34a853" /><circle cx="10" cy="10.500" r="4.700" fill="#fff" /><circle cx="10" cy="10.500" r="3.700" fill="#3c7de8" /><circle cx="17" cy="2.500" r="6" fill="#b48c94" /><path d="M11.500 1.500A6 6 0 0 1 17-3.500l1.500 6-3 5.500a6 6 0 0 1-4-6.500z" fill="#2a2028" />` },
    { name: "Fotos", open: true, art: svg`<rect x="1" y="1" width="18" height="18" rx="2.500" fill="#2f6fc4" /><path d="M1 15l8-8.500 8.500 9c1 1.500 0 3.500-1.500 3.500H3.500C2 19 1 18 1 16.500z" fill="#5fc8f4" /><path d="M10 19l4-5 5 3c0 1-1 2-2.500 2z" fill="#e8f4fc" /><circle cx="14.500" cy="5.500" r="1.800" fill="#e8f4fc" />` },
    { name: "Enlace móvil", open: true, badge: "8", tone: "sky", art: svg`<rect x="1" y="3" width="9" height="13" rx="1" fill="#1f8fd0" /><rect x="5" y="2" width="10" height="16" rx="1" fill="#34b4e4" /><rect x="13" y="8" width="6" height="8" rx="1" fill="#1670b4" />` },
    { name: "Discord", open: true, badge: "9+", tone: "red", art: svg`<circle cx="10" cy="10.500" r="9.800" fill="#5560e8" /><path d="M6 6.500c2.500-1 5.500-1 8 0 1.500 2.500 2 4.500 1.800 7-1 .8-2 1.200-3 1.400l-.8-1.300h-4l-.8 1.300c-1-.2-2-.6-3-1.400C4 11 4.500 9 6 6.500z" fill="#fff" /><circle cx="7.800" cy="11" r="1.200" fill="#5560e8" /><circle cx="12.200" cy="11" r="1.200" fill="#5560e8" />` },
    { name: "OBS", active: true, badge: "", tone: "rec", art: svg`<circle cx="10" cy="10" r="9" fill="#1c1c1e" stroke="#d8d8d8" stroke-width="1.200" /><g fill="none" stroke="#d8d8d8" stroke-width="1.500"><path d="M10 10C7 9.500 5.500 7 6.500 3.500" /><path d="M10 10c2.500-2 5.500-1 7.500 2" /><path d="M10 10c1 3-1 5.500-4.500 6" /></g>` },
  ];

  static styles = css`
    :host { display: flex; align-items: stretch; height: 39px; border-top: 1px solid #33392f; background: #1c1c1c; color: #fff; font-family: "Noto Sans", "Open Sans", sans-serif; overflow: hidden; }
    button { border: 0; background: none; padding: 0; color: inherit; font: inherit; display: grid; place-items: center; position: relative; }
    svg { display: block; overflow: visible; }
    .widgets { flex: 0 0 200px; display: flex; }
    .weather { width: 17px; height: 17px; border-radius: 50%; margin: 12px 0 0 19px; background: linear-gradient(135deg, #ffb52a, #f0822a); }
    .badge { position: absolute; top: -6px; right: -4px; min-width: 13px; height: 13px; border-radius: 7px; font-size: 9px; line-height: 13px; text-align: center; color: #fff; background: #c4262e; }
    .start { width: 36px; }
    .start svg { width: 20px; height: 20px; }
    .search { flex: none; width: 182px; height: 26px; margin: 6px 2px 0 4px; box-sizing: border-box; border-radius: 13px; background: #f3f3f3; display: flex; align-items: center; padding: 0 7px 0 9px; gap: 8px; }
    .search svg { flex: none; }
    .search input { flex: 1; width: 0; min-width: 0; border: 0; background: none; padding: 0; outline: 0; font: 11px/20px "Noto Sans", sans-serif; color: #5a5a5a; }
    .search input::placeholder { color: #5a5a5a; opacity: 1; }
    .glass { width: 13px; height: 13px; }
    .tree { width: 36px; height: 21px; }
    .apps { flex: 0 1 552px; display: flex; }
    .app { flex: 1; min-width: 0; }
    .app .icon { position: relative; width: 19px; height: 19px; }
    .icon svg { width: 19px; height: 19px; }
    .app.open::after, .app.active::after { content: ""; position: absolute; bottom: 4px; left: 50%; width: 5px; margin-left: -3px; height: 2px; border-radius: 1px; background: #9a9a9a; }
    .app.active::after { width: 13px; margin-left: -7px; background: #5cb8dc; }
    .app.active { background: #2b2b2b; border-radius: 4px; height: 35px; margin: 2px 1px 0; }
    .app.active::after { bottom: 2px; }
    .sky { background: #66ccf0; color: #15323e; }
    .red { background: #dc3a48; font-size: 8px; }
    .rec { background: #f00000; min-width: 10px; height: 10px; top: -3px; right: -3px; }
    .m365 { background: #111; top: auto; bottom: 0; right: 0; height: 6px; border-radius: 1px; font-size: 5px; line-height: 6px; font-weight: 700; }
    .tray { margin-left: auto; display: flex; align-items: center; padding-right: 15px; font-size: 10px; line-height: 13px; }
    .tray button { height: 36px; }
    .lang { text-align: center; width: 40px; }
    .clock { text-align: right; width: 62px; }
  `;

  render() {
    return html`
      <div class="widgets"><button class="weather" aria-label="Widgets"><span class="badge">1</span></button></div>
      <button class="start" aria-label="Inicio"><svg viewBox="0 0 20 20"><defs><linearGradient id="w" x1="0" y1="0" x2="1" y2="1"><stop stop-color="#8ae0fc" /><stop offset="1" stop-color="#1a9cf0" /></linearGradient></defs><path d="M.5.5h9v9h-9zM10.500.5h9v9h-9zM.5 10.500h9v9h-9zM10.500 10.500h9v9h-9z" fill="url(#w)" /></svg></button>
      <label class="search">
        <svg class="glass" viewBox="0 0 13 13" fill="none" stroke="#222" stroke-width="1.400"><circle cx="5.300" cy="5.300" r="4.300" /><path d="M8.500 8.500l4 4" /></svg>
        <input type="text" placeholder="Buscar" aria-label="Buscar" />
        <svg class="tree" viewBox="0 0 36 21"><path d="M3 4c2 5 4 9 12 13M9 11V8M13 16V9" stroke="#6fa03c" stroke-width="1.800" fill="none" /><circle cx="4" cy="2.800" r="2.600" fill="#9c2850" /><circle cx="8" cy="13" r="2.800" fill="#9c2850" /><circle cx="12" cy="8" r="2.800" fill="#86b83e" /><circle cx="3.500" cy="8" r="2" fill="#a8c46a" /><circle cx="15" cy="12" r="2.200" fill="#86b83e" /><path d="M24 20c3-4 2-7 1-10l2 1c1 2 1 3 3-1l2 0c-1 4-4 5-2 10z" fill="#c8a46a" /><path d="M18 7c0-3 3-3 4-4 2-3 6-3 8-1 4 0 6 3 5 6-2 2-4 1-6 1-2 1-4 0-6 0s-4 1-5-2z" fill="#6c9448" /></svg>
      </label>
      <div class="apps">
        ${this.apps.map(
          (a) => html`<button class=${classMap({ app: true, open: !!a.open, active: !!a.active })} aria-label=${a.name}>
            <span class="icon"><svg viewBox="0 0 20 20">${a.art}</svg>${a.badge !== undefined ? html`<span class="badge ${a.tone}">${a.badge}</span>` : ""}</span>
          </button>`
        )}
      </div>
      <div class="tray">
        <button aria-label="Iconos ocultos"><svg width="27" height="10" viewBox="0 0 27 10"><path d="M9.500 7.500l4-4 4 4" fill="none" stroke="#fff" stroke-width="1.400" /></svg></button>
        <button aria-label="OneDrive"><svg width="26" height="14" viewBox="0 0 26 14"><path d="M8 11.500a3 3 0 0 1 0-6c1-3 5.500-3.500 7-.5 3-.2 4.500 2 4 4-.3 1.500-1.500 2.500-3 2.500z" fill="#77797b" /><path d="M8 1.500l11 10.500" stroke="#e4e4e4" stroke-width="1.200" /></svg></button>
        <button aria-label="Micrófono"><svg width="26" height="16" viewBox="0 0 26 16" fill="none" stroke="#78d0dc" stroke-width="1.200"><rect x="11" y="1" width="4.500" height="9" rx="2.200" /><path d="M9 7.500c0 6 8.500 6 8.500 0M13.200 12v3" /></svg></button>
        <div class="lang">ESP<br />LAA</div>
        <button aria-label="Red"><svg width="22" height="14" viewBox="0 0 22 14" fill="none" stroke="#fff" stroke-width="1.100"><path d="M5 5.500c4-4 9-4 13 0M7 8c3-2.800 6-2.800 9 0M9 10.300c2-1.500 3-1.500 5 0" /><circle cx="11.500" cy="12" r=".8" fill="#fff" /></svg></button>
        <button aria-label="Volumen"><svg width="18" height="14" viewBox="0 0 18 14" fill="none" stroke="#fff" stroke-width="1.100"><path d="M3 5v4h2.500L9 12V2L5.500 5zM11 5c1 1.200 1 2.800 0 4M13 3.500c2 2 2 5 0 7" /><path d="M15 2.500c2.300 2.500 2.300 6.500 0 9" stroke="#777" /></svg></button>
        <button aria-label="Batería"><svg width="22" height="14" viewBox="0 0 22 14"><rect x="5.500" y="4.500" width="12" height="7" rx="1.500" fill="#dcdcdc" stroke="#fff" /><path d="M18.500 6.500v3" stroke="#fff" stroke-width="1.500" /><path d="M6 0L3.500 5h2.500L5 9l4-5.500H6.800L8 0z" fill="#fff" stroke="#1c1c1c" stroke-width=".5" /></svg></button>
        <div class="clock">21:19<br />26/11/2025</div>
      </div>
    `;
  }
}

@customElement("app-root")
class AppRoot extends LitElement {
  static styles = css`
    :host { display: flex; flex-direction: column; height: 100vh; overflow: hidden; }
    match-page { flex: 1; }
    browser-chrome, task-bar { flex: none; }
  `;

  render() {
    return html`<browser-chrome></browser-chrome><match-page></match-page><task-bar></task-bar>`;
  }
}
